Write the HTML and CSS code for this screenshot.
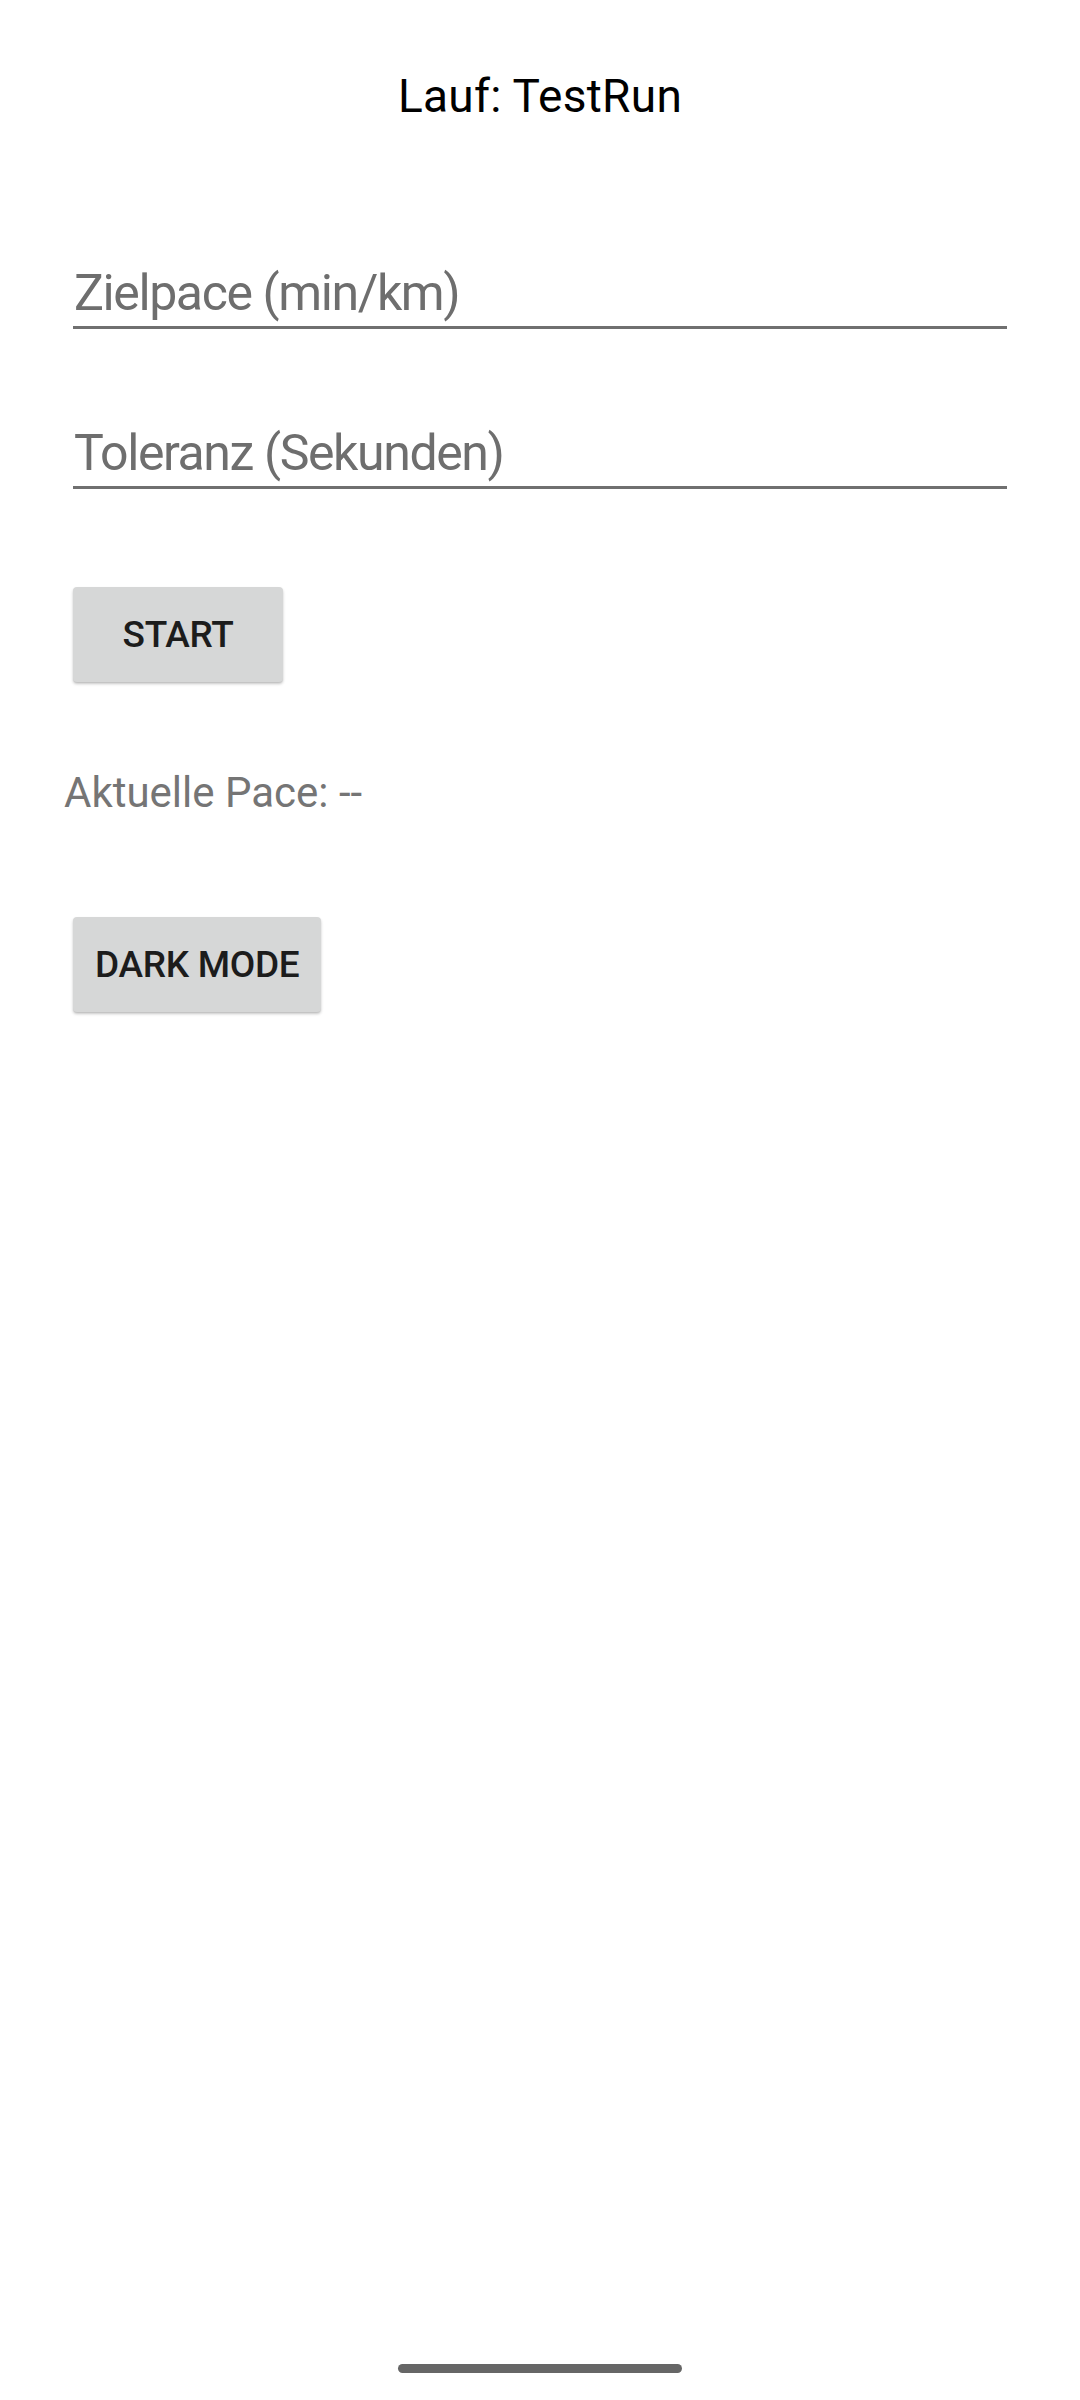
FILE: index.html
```html
<!DOCTYPE html>
<html lang="de">
<head>
<meta charset="utf-8">
<title>Lauf: TestRun</title>
<link rel="stylesheet" href="styles.css">
</head>
<body>
<div class="screen">
  <h1 class="title">Lauf: TestRun</h1>
  <input class="field field-first" type="text" placeholder="Zielpace (min/km)">
  <input class="field field-second" type="text" placeholder="Toleranz (Sekunden)">
  <button class="btn btn-start" type="button">START</button>
  <p class="pace">Aktuelle Pace: --</p>
  <button class="btn btn-dark" type="button">DARK MODE</button>
  <div class="home-indicator"></div>
</div>
</body>
</html>
```

FILE: styles.css
```css
* { box-sizing: border-box; }
html, body {
  margin: 0;
  padding: 0;
  background: #ffffff;
}
body {
  font-family: Roboto, "Noto Sans", "Liberation Sans", sans-serif;
}
.screen {
  width: 1080px;
  min-height: 2400px;
  display: flex;
  flex-direction: column;
  align-items: flex-start;
}
.title {
  align-self: stretch;
  margin: 68px 0 0 0;
  font-size: 46px;
  line-height: 56px;
  font-weight: 400;
  letter-spacing: 0.3px;
  color: #000000;
  text-align: center;
}
.field {
  box-sizing: content-box;
  width: 933px;
  height: 60px;
  margin: 0 0 0 73px;
  padding: 0 0 3px 1px;
  border: none;
  border-bottom: 3px solid #707070;
  background: transparent;
  font-family: Roboto, "Noto Sans", "Liberation Sans", sans-serif;
  font-size: 50px;
  line-height: 60px;
  letter-spacing: -1.4px;
  color: #000;
  outline: none;
}
.field::placeholder {
  color: #6e6e6e;
  opacity: 1;
}
.field-first { margin-top: 139px; }
.field-second { margin-top: 94px; }
.btn {
  display: flex;
  align-items: center;
  justify-content: center;
  height: 95px;
  min-width: 210px;
  margin: 0 0 0 73px;
  padding: 0 22px;
  border: none;
  border-radius: 4px;
  background: #d6d7d7;
  box-shadow: 0 2px 3px rgba(0, 0, 0, 0.22), 0 1px 1px rgba(0, 0, 0, 0.06);
  font-family: Roboto, "Noto Sans", "Liberation Sans", sans-serif;
  font-size: 37px;
  font-weight: 500;
  letter-spacing: -0.3px;
  color: #1c1c1c;
}
.btn-start { margin-top: 98px; }
.pace {
  margin: 83px 0 0 64px;
  font-size: 42px;
  line-height: 56px;
  color: #757575;
}
.btn-dark { margin-top: 96px; }
.home-indicator {
  align-self: center;
  margin-top: auto;
  margin-bottom: 27px;
  width: 284px;
  height: 9px;
  border-radius: 5px;
  background: #666666;
}
```
